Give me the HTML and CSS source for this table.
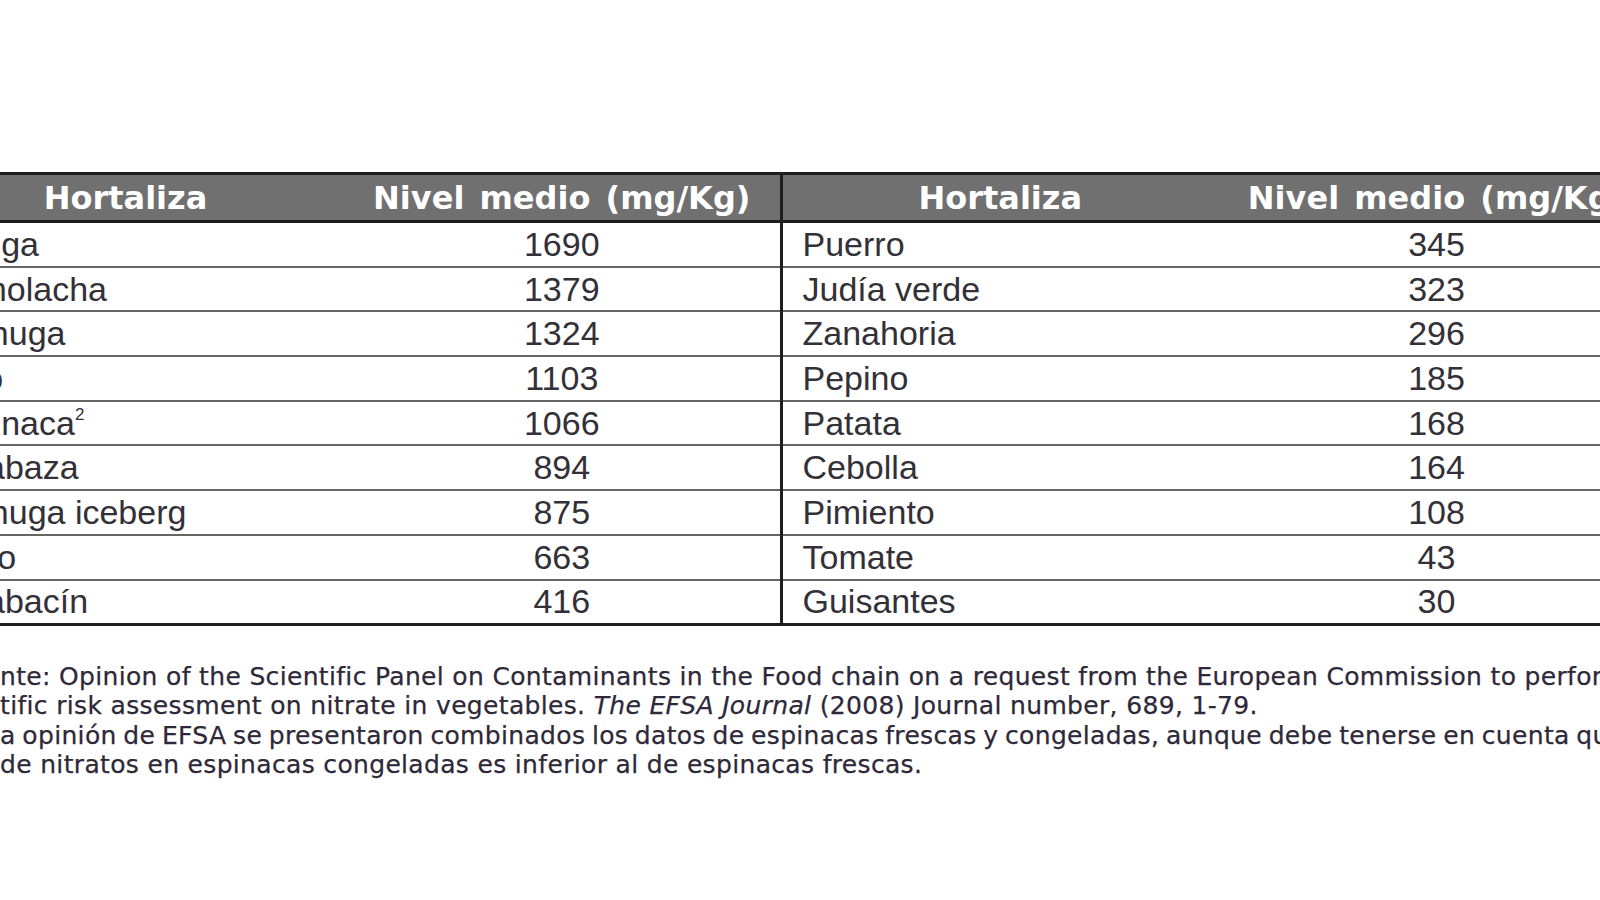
FILE: index.html
```html
<!DOCTYPE html>
<html lang="es">
<head>
<meta charset="utf-8">
<title>Nitratos en hortalizas</title>
<link rel="stylesheet" href="styles.css">
</head>
<body>
<div class="page">
  <div class="sheet">
    <table class="nitratos">
      <colgroup><col class="c"><col class="c"><col class="c"><col class="c"></colgroup>
      <thead>
        <tr><th>Hortaliza</th><th>Nivel medio (mg/Kg)</th><th class="split">Hortaliza</th><th>Nivel medio (mg/Kg)</th></tr>
      </thead>
      <tbody>
        <tr><td class="name first">Acelga</td><td class="num">1690</td><td class="name split">Puerro</td><td class="num">345</td></tr>
        <tr><td class="name first">Remolacha</td><td class="num">1379</td><td class="name split">Judía verde</td><td class="num">323</td></tr>
        <tr><td class="name first">Lechuga</td><td class="num">1324</td><td class="name split">Zanahoria</td><td class="num">296</td></tr>
        <tr><td class="name first">Apio</td><td class="num">1103</td><td class="name split">Pepino</td><td class="num">185</td></tr>
        <tr><td class="name first">Espinaca<sup>2</sup></td><td class="num">1066</td><td class="name split">Patata</td><td class="num">168</td></tr>
        <tr><td class="name first">Calabaza</td><td class="num">894</td><td class="name split">Cebolla</td><td class="num">164</td></tr>
        <tr><td class="name first">Lechuga iceberg</td><td class="num">875</td><td class="name split">Pimiento</td><td class="num">108</td></tr>
        <tr><td class="name first">Nabo</td><td class="num">663</td><td class="name split">Tomate</td><td class="num">43</td></tr>
        <tr><td class="name first">Calabacín</td><td class="num">416</td><td class="name split">Guisantes</td><td class="num">30</td></tr>
      </tbody>
    </table>
  </div>
  <div class="notes">
    <div class="ln"><span class="cut"><sup>1</sup>Fue</span>nte: Opinion of the Scientific Panel on Contaminants in the Food chain on a request from the European Commission to perform a</div>
    <div class="ln"><span class="cut">scien</span>tific risk assessment on nitrate in vegetables. <em>The EFSA Journal</em> (2008) Journal number, 689, 1-79.</div>
    <div class="ln tight"><span class="cut"><sup>2</sup>En l</span>a opinión de EFSA se presentaron combinados los datos de espinacas frescas y congeladas, aunque debe tenerse en cuenta que el</div>
    <div class="ln"><span class="cut">nivel </span>de nitratos en espinacas congeladas es inferior al de espinacas frescas.</div>
  </div>
</div>
</body>
</html>
```
FILE: styles.css
```css
html, body {
  margin: 0;
  padding: 0;
  background: #ffffff;
}
.page {
  width: 1600px;
  height: 900px;
  overflow: hidden;
  padding-top: 172px;
  box-sizing: border-box;
}
.sheet {
  margin-left: -93px;
  width: 1748px;
}
.nitratos {
  width: 1748px;
  border-collapse: collapse;
  table-layout: fixed;
  font-family: "Liberation Sans", Arial, sans-serif;
  color: #333038;
}
.nitratos .c { width: 25%; }
.nitratos thead th {
  background: #707070;
  color: #ffffff;
  font-family: "DejaVu Sans", Verdana, sans-serif;
  font-weight: bold;
  font-size: 32px;
  word-spacing: 4px;
  height: 45px;
  padding: 0;
  border-top: 3px solid #1e1e1e;
  border-bottom: 3px solid #1e1e1e;
  text-align: center;
  vertical-align: middle;
}
.nitratos td {
  height: 42.7px;
  padding: 0;
  font-size: 34px;
  border-bottom: 2px solid #666666;
  vertical-align: middle;
}
.nitratos tbody tr:last-child td {
  border-bottom: 3px solid #1e1e1e;
}
.nitratos .split {
  border-left: 3px solid #1e1e1e;
}
.nitratos td.name {
  text-align: left;
  padding-left: 20px;
}
.nitratos td.name.first {
  padding-left: 28px;
}
.nitratos td.num {
  text-align: center;
}
.nitratos sup {
  font-size: 17px;
  vertical-align: 15px;
  line-height: 0;
}
.notes {
  margin-top: 36px;
  font-family: "DejaVu Sans", Verdana, sans-serif;
  font-size: 25px;
  letter-spacing: 0.33px;
  line-height: 29.3px;
  color: #2e2838;
  -webkit-text-stroke: 0.25px #2e2838;
}
.ln {
  white-space: nowrap;
}
.ln.tight {
  word-spacing: -1.6px;
}
.cut {
  display: inline-block;
  width: 240px;
  margin-left: -240px;
  text-align: right;
}
.notes sup {
  font-size: 15px;
  line-height: 0;
}
```
